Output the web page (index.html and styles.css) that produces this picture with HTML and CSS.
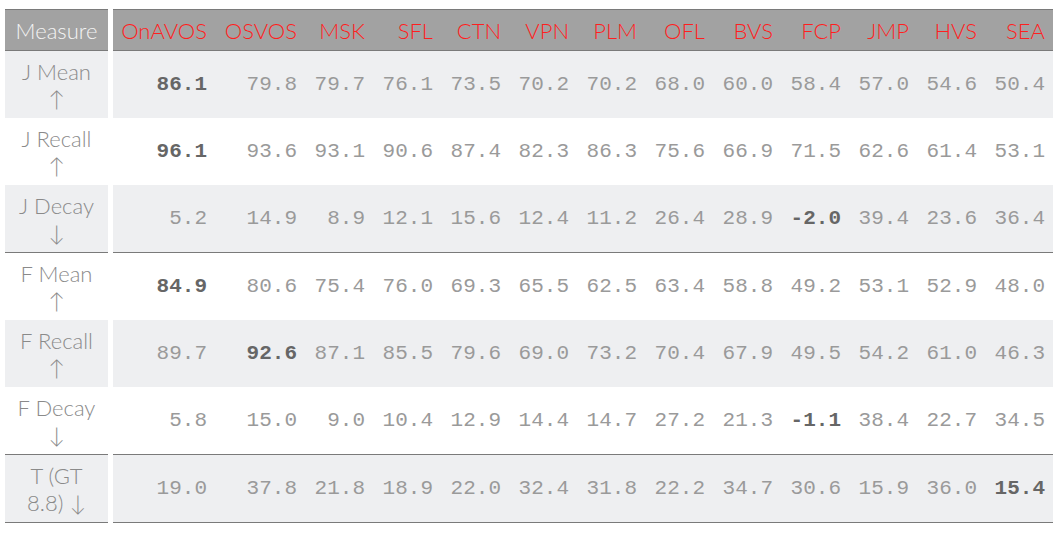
FILE: index.html
```html
<!DOCTYPE html>
<html>
<head>
<meta charset="utf-8">
<link rel="stylesheet" href="styles.css">
</head>
<body>
<table class="results">
  <colgroup>
    <col class="c-label">
    <col class="c-gap">
    <col class="c-first">
    <col class="c-second">
    <col class="c-std"><col class="c-std"><col class="c-std"><col class="c-std"><col class="c-std">
    <col class="c-std"><col class="c-std"><col class="c-std"><col class="c-std"><col class="c-std"><col class="c-std">
  </colgroup>
  <thead>
    <tr>
      <th class="label">Measure</th><th class="gap"></th>
      <th>OnAVOS</th><th>OSVOS</th><th>MSK</th><th>SFL</th><th>CTN</th><th>VPN</th><th>PLM</th><th>OFL</th><th>BVS</th><th>FCP</th><th>JMP</th><th>HVS</th><th>SEA</th>
    </tr>
  </thead>
  <tbody>
    <tr class="odd">
      <td class="label">J Mean<br>↑</td><td class="gap"></td>
      <td><b>86.1</b></td><td>79.8</td><td>79.7</td><td>76.1</td><td>73.5</td><td>70.2</td><td>70.2</td><td>68.0</td><td>60.0</td><td>58.4</td><td>57.0</td><td>54.6</td><td>50.4</td>
    </tr>
    <tr>
      <td class="label">J Recall<br>↑</td><td class="gap"></td>
      <td><b>96.1</b></td><td>93.6</td><td>93.1</td><td>90.6</td><td>87.4</td><td>82.3</td><td>86.3</td><td>75.6</td><td>66.9</td><td>71.5</td><td>62.6</td><td>61.4</td><td>53.1</td>
    </tr>
    <tr class="odd sep">
      <td class="label">J Decay<br>↓</td><td class="gap"></td>
      <td>5.2</td><td>14.9</td><td>8.9</td><td>12.1</td><td>15.6</td><td>12.4</td><td>11.2</td><td>26.4</td><td>28.9</td><td><b>-2.0</b></td><td>39.4</td><td>23.6</td><td>36.4</td>
    </tr>
    <tr>
      <td class="label">F Mean<br>↑</td><td class="gap"></td>
      <td><b>84.9</b></td><td>80.6</td><td>75.4</td><td>76.0</td><td>69.3</td><td>65.5</td><td>62.5</td><td>63.4</td><td>58.8</td><td>49.2</td><td>53.1</td><td>52.9</td><td>48.0</td>
    </tr>
    <tr class="odd">
      <td class="label">F Recall<br>↑</td><td class="gap"></td>
      <td>89.7</td><td><b>92.6</b></td><td>87.1</td><td>85.5</td><td>79.6</td><td>69.0</td><td>73.2</td><td>70.4</td><td>67.9</td><td>49.5</td><td>54.2</td><td>61.0</td><td>46.3</td>
    </tr>
    <tr class="sep">
      <td class="label">F Decay<br>↓</td><td class="gap"></td>
      <td>5.8</td><td>15.0</td><td>9.0</td><td>10.4</td><td>12.9</td><td>14.4</td><td>14.7</td><td>27.2</td><td>21.3</td><td><b>-1.1</b></td><td>38.4</td><td>22.7</td><td>34.5</td>
    </tr>
    <tr class="odd sep">
      <td class="label">T (GT<br>8.8) ↓</td><td class="gap"></td>
      <td>19.0</td><td>37.8</td><td>21.8</td><td>18.9</td><td>22.0</td><td>32.4</td><td>31.8</td><td>22.2</td><td>34.7</td><td>30.6</td><td>15.9</td><td>36.0</td><td><b>15.4</b></td>
    </tr>
  </tbody>
</table>
</body>
</html>
```
FILE: styles.css
```css
html, body {
  margin: 0;
  background: #fff;
}
body {
  padding: 9px 5px 0 5px;
}
.results {
  border-collapse: collapse;
  table-layout: fixed;
  width: 1048px;
}
.c-label { width: 103px; }
.c-gap { width: 5px; }
.c-first { width: 102px; }
.c-second { width: 90px; }
.c-std { width: 68px; }

.results th {
  background: #a2a2a2;
  color: #ff1f1f;
  font-family: "Lato", "Liberation Sans", sans-serif;
  font-weight: 300;
  font-size: 22px;
  height: 40px;
  padding: 0 8px 0 0;
  text-align: right;
  border-top: 1px solid #7a7a7a;
  border-bottom: 1px solid #7a7a7a;
  white-space: nowrap;
}
.results th.label {
  color: #f4f4f4;
  text-align: center;
  padding: 0;
}
.results .gap {
  background: #fff;
  border: none;
  padding: 0;
}
.results td {
  font-family: "Liberation Mono", "Courier New", monospace;
  font-size: 21px;
  color: #9a9a9a;
  text-align: right;
  padding: 0 8px 0 0;
  height: 67px;
}
.results td b {
  color: #666;
  font-weight: bold;
}
.results td.label {
  font-family: "Lato", "Liberation Sans", sans-serif;
  font-weight: 300;
  font-size: 22px;
  line-height: 27px;
  color: #8a8a8a;
  text-align: center;
  padding: 0;
}
.results tr.odd td {
  background: #eeeff1;
}
.results tr.odd td.gap {
  background: #fff;
}
.results tr.sep td {
  border-bottom: 1px solid #7a7a7a;
}
.results tr.sep td.gap {
  border-bottom: none;
}
```
